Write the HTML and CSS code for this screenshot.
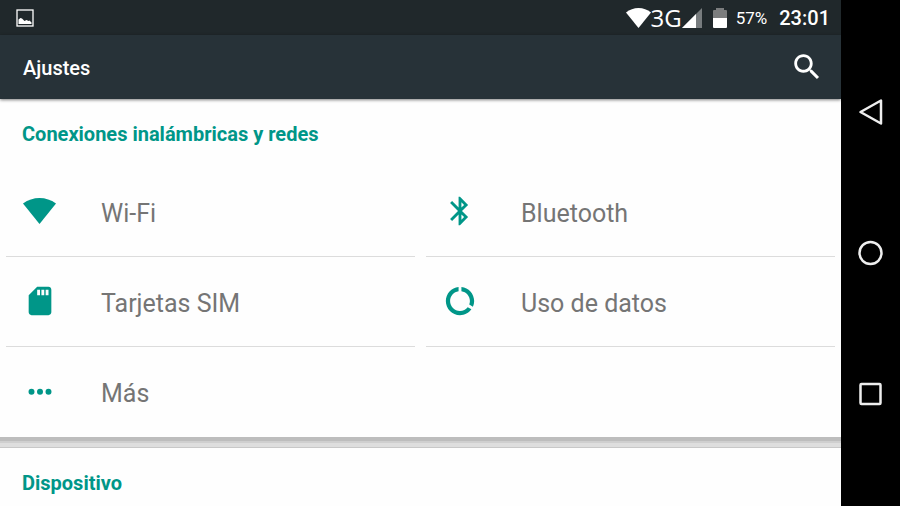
FILE: index.html
```html
<!DOCTYPE html>
<html lang="es">
<head>
<meta charset="utf-8">
<meta name="viewport" content="width=device-width, initial-scale=1">
<title>Ajustes</title>
<link rel="stylesheet" href="styles.css">
</head>
<body>
<div class="screen">
  <div class="status-bar">
    <svg class="notification" viewBox="0 0 18 18" aria-hidden="true"><rect x="1" y="1" width="16" height="16" fill="none" stroke="#fff" stroke-width="1.3"/><path d="M2.500 15v-4.500l2-1.500 1.500.5 2.500 2.500 2-1 2 1 1-.5 2 2V15z" fill="#fff"/></svg>
    <div class="indicators">
      <svg class="status-wifi" viewBox="0 0 25 20" aria-hidden="true"><path d="M12.500 20L0 4.500Q5.500 0 12.500 0T25 4.500z" fill="#fff"/></svg>
      <span class="network">3G</span>
      <svg class="signal" viewBox="0 0 20 20" aria-hidden="true"><path d="M0 20L20 0v20z" fill="#777c7e"/><path d="M0 20L14 6v14z" fill="#fff"/></svg>
      <svg class="battery" viewBox="0 0 14 20" aria-hidden="true"><path d="M0 10V3q0-1 1-1h2V0h8v2h2q1 0 1 1v7z" fill="#7b7d7e"/><path d="M0 10h14v9q0 1-1 1H1q-1 0-1-1z" fill="#fff"/></svg>
      <span class="percent">57%</span>
      <time class="clock">23:01</time>
    </div>
  </div>
  <header class="app-bar">
    <h1>Ajustes</h1>
    <button type="button" class="search" aria-label="Buscar">
      <svg class="icon" viewBox="0 0 24 24" aria-hidden="true"><path d="M15.500 14h-.79l-.28-.27C15.410 12.590 16 11.110 16 9.500 16 5.910 13.090 3 9.500 3S3 5.910 3 9.500 5.910 16 9.500 16c1.610 0 3.090-.59 4.230-1.570l.27.28v.79l5 4.990L20.490 19l-4.990-5zm-6 0C7.010 14 5 11.990 5 9.500S7.010 5 9.500 5 14 7.010 14 9.500 11.990 14 9.500 14z"/></svg>
    </button>
  </header>
  <main>
    <section class="group">
      <h2>Conexiones inalámbricas y redes</h2>
      <div class="tiles">
        <a class="tile" href="#wifi">
          <svg class="icon" viewBox="0 0 34 34" aria-hidden="true"><path d="M16.500 30L0 9.500Q7.500 4 16.500 4T33 9.500z"/></svg>
          <span>Wi-Fi</span>
        </a>
        <a class="tile" href="#bluetooth">
          <svg class="icon" viewBox="0 0 24 24" aria-hidden="true"><path d="M17.710 7.710L12 2h-1v7.590L6.410 5 5 6.410 10.590 12 5 17.590 6.410 19 11 14.410V22h1l5.710-5.710-4.300-4.290 4.300-4.290zM13 5.830l1.880 1.880L13 9.590V5.830zm1.880 10.460L13 18.170v-3.760l1.880 1.880z"/></svg>
          <span>Bluetooth</span>
        </a>
        <a class="tile" href="#sim">
          <svg class="icon" viewBox="0 0 24 24" aria-hidden="true"><path d="M18 2h-8L4.020 8 4 20c0 1.100.9 2 2 2h12c1.100 0 2-.9 2-2V4c0-1.100-.9-2-2-2zm-6 6h-2V4h2v4zm3 0h-2V4h2v4zm3 0h-2V4h2v4z"/></svg>
          <span>Tarjetas SIM</span>
        </a>
        <a class="tile" href="#datos">
          <svg class="icon" viewBox="0 0 24 24" aria-hidden="true"><path d="M13 2.050v3.030c3.390.49 6 3.390 6 6.920 0 .9-.18 1.750-.48 2.540l2.600 1.530c.56-1.240.88-2.620.88-4.070 0-5.180-3.950-9.450-9-9.950zM12 19c-3.870 0-7-3.130-7-7 0-3.530 2.610-6.430 6-6.920V2.050c-5.060.5-9 4.760-9 9.950 0 5.520 4.470 10 9.990 10 3.310 0 6.240-1.610 8.060-4.090l-2.600-1.530C16.170 17.980 14.210 19 12 19z"/></svg>
          <span>Uso de datos</span>
        </a>
        <a class="tile" href="#mas">
          <svg class="icon" viewBox="0 0 24 24" aria-hidden="true"><circle cx="6" cy="12.500" r="2.100"/><circle cx="12" cy="12.500" r="2.100"/><circle cx="18" cy="12.500" r="2.100"/></svg>
          <span>Más</span>
        </a>
      </div>
    </section>
    <section class="group">
      <h2>Dispositivo</h2>
    </section>
  </main>
</div>
<nav class="nav-bar" aria-label="Navegación">
  <button type="button" aria-label="Atrás"><svg viewBox="0 0 28 28" aria-hidden="true"><path d="M24 2.500v23L3.500 14z"/></svg></button>
  <button type="button" aria-label="Inicio"><svg viewBox="0 0 28 28" aria-hidden="true"><circle cx="13.500" cy="14" r="11"/></svg></button>
  <button type="button" aria-label="Recientes"><svg viewBox="0 0 28 28" aria-hidden="true"><rect x="3.500" y="4" width="20" height="20" rx="1"/></svg></button>
</nav>
</body>
</html>
```
FILE: styles.css
```css
* {
  box-sizing: border-box;
}

body {
  display: flex;
  height: 100vh;
  margin: 0;
  background: #000;
  font-family: Roboto, sans-serif;
}

h1,
h2 {
  margin: 0;
  font-size: 20px;
  line-height: 24px;
}

button {
  display: grid;
  place-items: center;
  padding: 0;
  border: 0;
  background: none;
}

.screen {
  display: flex;
  flex: 1;
  flex-direction: column;
  min-width: 0;
  overflow: hidden;
  background: #fefefe;
}

.status-bar {
  display: flex;
  flex: none;
  align-items: center;
  justify-content: space-between;
  height: 35px;
  padding: 0 11px 0 16px;
  background: #20282b;
  color: #fff;
}

.notification {
  width: 18px;
  height: 18px;
}

.indicators {
  display: flex;
  align-items: center;
}

.status-wifi {
  width: 25px;
  height: 20px;
}

.network {
  font-family: "Open Sans", sans-serif;
  font-size: 24px;
  line-height: 32px;
}

.signal {
  width: 20px;
  height: 20px;
}

.battery {
  width: 14px;
  height: 20px;
  margin: 0 9px 0 11px;
}

.percent {
  font-size: 17px;
}

.clock {
  margin-left: 12px;
  font-size: 20px;
  font-weight: 500;
}

.app-bar {
  z-index: 1;
  display: flex;
  flex: none;
  align-items: center;
  justify-content: space-between;
  height: 64px;
  padding: 0 17px 0 23px;
  background: #273238;
  box-shadow: 0 1px 3px rgba(0, 0, 0, 0.5);
  color: #fff;
}

.app-bar h1 {
  padding-top: 2px;
  font-weight: 500;
}

.icon {
  flex: none;
  width: 34px;
  height: 34px;
  fill: currentColor;
}

.search {
  color: #fff;
}

.group h2 {
  padding: 23px 22px 21px;
  color: #009688;
  font-weight: 700;
}

.group + .group {
  border-top: 1px solid #c8c8c8;
}

.group:first-child::after {
  display: block;
  height: 10px;
  background: linear-gradient(#bdbdbd 4px, #cfcfcf 4px 6px, #dedede 6px);
  content: "";
}

.tiles {
  display: grid;
  grid-template-columns: 1fr 1fr;
  column-gap: 11px;
  padding: 0 6px;
}

.tile {
  display: flex;
  align-items: center;
  gap: 44px;
  height: 90px;
  padding: 0 0 2px 17px;
  border-bottom: 1px solid #dcdcdc;
  color: #757575;
  font-size: 25px;
  line-height: 32px;
  text-decoration: none;
}

.tile .icon {
  color: #009688;
}

.tile span {
  padding-top: 6px;
}

.tile:last-child {
  border-bottom: 0;
}

.nav-bar {
  display: grid;
  flex: none;
  grid-auto-rows: 141px;
  align-content: center;
  width: 59px;
}

.nav-bar svg {
  width: 28px;
  height: 28px;
  fill: none;
  stroke: #eee;
  stroke-width: 2.500;
  stroke-linejoin: round;
}
```
